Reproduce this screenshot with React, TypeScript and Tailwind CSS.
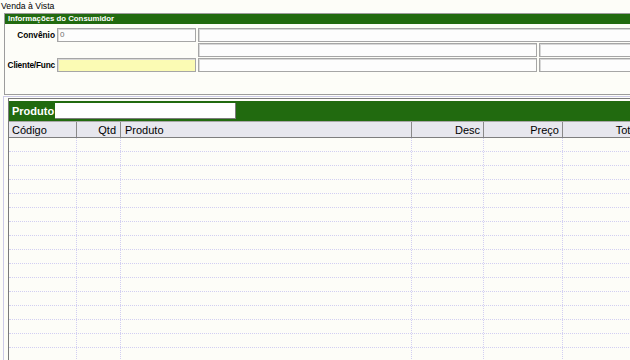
const green = 'bg-[#216a0f]';

const columns = [
  { label: 'Código', width: 'w-[68px]', align: 'justify-start pl-[3px]' },
  { label: 'Qtd', width: 'w-[44px]', align: 'justify-end pr-[4px]' },
  { label: 'Produto', width: 'w-[291px]', align: 'justify-start pl-[4px]' },
  { label: 'Desc', width: 'w-[72px]', align: 'justify-end pr-[3px]' },
  { label: 'Preço', width: 'w-[79px]', align: 'justify-end pr-[3px]' },
  { label: 'Total', width: 'w-[80px]', align: 'justify-end pr-[3px]' },
];

const rows = Array.from({ length: 17 }, (_, i) => i);

function Field({ className = '', children }: { className?: string; children?: React.ReactNode }) {
  return (
    <div
      className={`h-[14px] border border-[#a6a6a6] shadow-[inset_1px_1px_0_#d8d8d8] text-[8px] leading-[11px] pl-[2px] text-[#707070] ${className}`}
    >
      {children}
    </div>
  );
}

function ConsumerBox() {
  return (
    <div className="ml-[4px] w-[640px] h-[82px] border border-[#9c9c9c]">
      <div className={`${green} h-[10px] pl-[3px] text-white font-bold text-[7.8px] leading-[10px]`}>
        Informações do Consumidor
      </div>
      <div className="mt-[4px] flex flex-col gap-[1px]">
        <div className="flex items-center">
          <span className="w-[50px] mr-[2px] text-right font-bold text-[8.3px]">Convênio</span>
          <Field className="w-[139px] bg-[#fdfdfd]">0</Field>
          <Field className="ml-[2px] w-[440px] bg-[#fdfdfd]" />
        </div>
        <div className="flex items-center pl-[193px]">
          <Field className="w-[339px] bg-[#fdfdfd]" />
          <Field className="ml-[2px] w-[100px] bg-[#fdfdfd]" />
        </div>
        <div className="flex items-center">
          <span className="w-[50px] mr-[2px] text-right font-bold text-[8.3px] tracking-[-0.2px]">Cliente/Func</span>
          <Field className="w-[139px] bg-[#fbfbb4]" />
          <Field className="ml-[2px] w-[339px] bg-[#fdfdfd]" />
          <Field className="ml-[2px] w-[100px] bg-[#fdfdfd]" />
        </div>
      </div>
    </div>
  );
}

function ProductPanel() {
  return (
    <div className="ml-[3px] mt-[1px] w-[640px] h-[270px] border-t border-l border-[#cdcbe8] pl-[4px] pt-[1px]">
      <div className="h-full border-l border-t border-[#7a7a7a] pt-[2px]">
        <div className={`${green} h-[21px] flex items-start border-b border-[#a8a8a8]`}>
          <span className="w-[46px] pl-[3px] text-white font-bold text-[11px] leading-[21px]">Produto</span>
          <div className="mt-[2px] w-[181px] h-[16px] bg-white border-r border-b border-[#7c7c7c]" />
        </div>
        <div className="flex h-[16px] bg-[#e7e7ee] border-b border-[#7e7e7e]">
          {columns.map((c) => (
            <div
              key={c.label}
              className={`${c.width} ${c.align} flex items-center shrink-0 border-r border-[#8a8a8a] text-[11px] leading-[14px]`}
            >
              {c.label}
            </div>
          ))}
        </div>
        {rows.map((r) => (
          <div key={r} className="flex h-[14px] border-b border-dotted border-[#d2cff2]">
            {columns.map((c) => (
              <div key={c.label} className={`${c.width} shrink-0 border-r border-dotted border-[#d2cff2]`} />
            ))}
          </div>
        ))}
      </div>
    </div>
  );
}

export default function App() {
  return (
    <div className="w-[630px] h-[360px] overflow-hidden bg-[#fdfdf8] font-['Liberation_Sans',Arial,sans-serif] text-black">
      <div className="h-[13px] pl-[1px] text-[8.7px] leading-[12px]">Venda à Vista</div>
      <ConsumerBox />
      <ProductPanel />
    </div>
  );
}
